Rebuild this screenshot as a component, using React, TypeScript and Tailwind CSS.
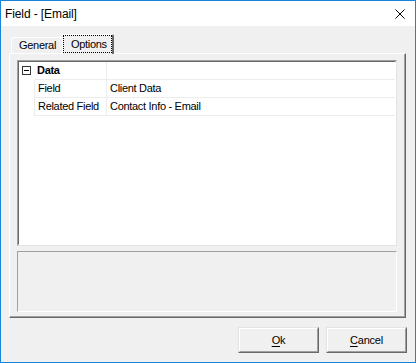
import React from "react";

const rows = [
    { name: "Field", value: "Client Data" },
    { name: "Related Field", value: "Contact Info - Email" },
];

function Btn({ hot, rest }: { hot: string; rest: string }) {
    return (
        <button
            type="button"
            className="w-[81px] h-[26px] border border-t-[#e3e3e3] border-l-[#e3e3e3] border-r-[#696969] border-b-[#696969] bg-[#f0f0f0]"
        >
            <div className="h-full w-full border border-t-white border-l-white border-r-[#a0a0a0] border-b-[#a0a0a0] flex items-center justify-center text-[11px] tracking-[-0.2px] text-black">
                <span>
                    <span className="underline underline-offset-[2px]">{hot}</span>
                    {rest}
                </span>
            </div>
        </button>
    );
}

export default function App() {
    return (
        <div className="w-[416px] h-[363px] border border-[#1883d7] bg-[#f0f0f0] flex flex-col font-['Liberation_Sans',Arial,sans-serif] text-black">
            {/* title bar */}
            <div className="h-[25px] bg-white flex items-center justify-between pl-[4px] pr-[10px]">
                <span className="text-[12px] tracking-[-0.1px]">Field - [Email]</span>
                <svg width="10" height="10" viewBox="0 0 10 10" className="block">
                    <path d="M0.5 0.5 L9.5 9.5 M9.5 0.5 L0.5 9.5" stroke="#000" strokeWidth="1" />
                </svg>
            </div>

            {/* tabs */}
            <div className="h-[27px] flex items-end pl-[10px] text-[11px] tracking-[-0.3px]">
                <div className="w-[51px] h-[16px] border-t border-l border-t-white border-l-white rounded-tl-[2px] flex items-center pl-[7px]">
                    General
                </div>
                <div className="relative z-10 -mb-px w-[52px] h-[20px] bg-[#f0f0f0] border-t border-l border-r-2 border-t-white border-l-white border-r-[#696969] rounded-tr-[2px] flex">
                    <div className="flex-1 border border-dotted border-black mb-px flex items-center pl-[7px]">
                        Options
                    </div>
                </div>
            </div>

            {/* tab page */}
            <div className="ml-[8px] w-[397px] h-[265px] border border-t-white border-l-white border-r-[#696969] border-b-[#696969]">
                <div className="h-full w-full border-r border-b border-r-[#a0a0a0] border-b-[#a0a0a0] flex flex-col pt-[6px] px-[7px] pb-[4px] gap-[5px]">
                    {/* property grid */}
                    <div className="h-[186px] border border-t-[#a0a0a0] border-l-[#a0a0a0] border-r-[#e3e3e3] border-b-[#e3e3e3]">
                        <div className="h-full border border-t-[#696969] border-l-[#696969] border-r-white border-b-white bg-white text-[11px] tracking-[-0.3px] leading-[17px]">
                            <div className="flex h-[18px]">
                                <div className="w-[16px] pl-[3px] pt-[4px]">
                                    <div className="w-[9px] h-[9px] border border-[#333] flex items-center justify-center">
                                        <div className="w-[5px] h-px bg-black" />
                                    </div>
                                </div>
                                <div className="flex flex-1 border-b border-[#ececec]">
                                    <div className="w-[72px] border-r border-[#ececec] pl-[2px] font-bold">Data</div>
                                    <div className="flex-1" />
                                </div>
                            </div>
                            {rows.map((r) => (
                                <div key={r.name} className="flex h-[18px]">
                                    <div className="w-[16px] border-r border-[#ececec]" />
                                    <div className="flex flex-1 border-b border-[#ececec]">
                                        <div className="w-[72px] border-r border-[#ececec] pl-[3px]">{r.name}</div>
                                        <div className="flex-1 pl-[3px]">{r.value}</div>
                                    </div>
                                </div>
                            ))}
                        </div>
                    </div>
                    {/* description */}
                    <div className="h-[61px] border border-t-[#a0a0a0] border-l-[#a0a0a0] border-r-white border-b-white bg-[#f0f0f0]" />
                </div>
            </div>

            {/* buttons */}
            <div className="mt-[9px] flex justify-end gap-[7px] pr-[8px]">
                <Btn hot="O" rest="k" />
                <Btn hot="C" rest="ancel" />
            </div>
        </div>
    );
}
